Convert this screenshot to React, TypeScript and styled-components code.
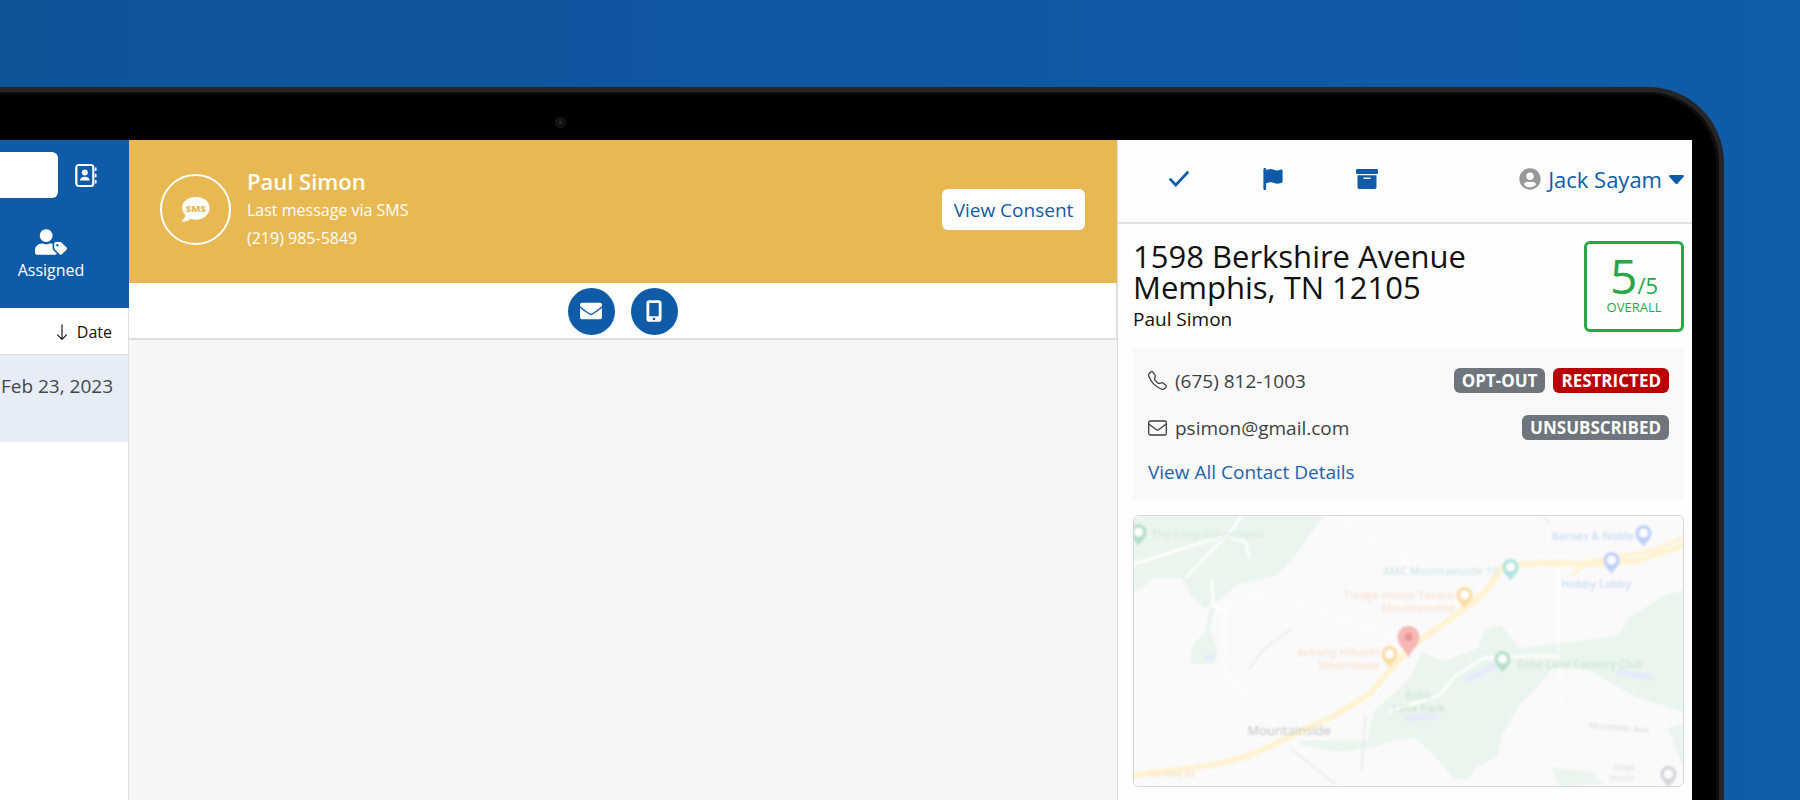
import React from "react";
import styled, { createGlobalStyle } from "styled-components";
import { FaUserTag, FaEnvelope, FaUserCircle } from "react-icons/fa";
import { FaFlag } from "react-icons/fa6";
import { BsArrowDown, BsTelephone } from "react-icons/bs";

const BLUE = "#0f5ba7";
const LINE = "#dddee0";

const GlobalStyle = createGlobalStyle`
  *, *::before, *::after { box-sizing: border-box; }
  body {
    margin: 0;
    font-family: "Open Sans", "Noto Sans", sans-serif;
    color: #111;
  }
  button, input { font: inherit; }
  button { border: 0; padding: 0; background: none; cursor: pointer; }
  svg { display: block; flex: none; }
`;

const Stage = styled.main`
  display: flex;
  height: 100vh;
  overflow: hidden;
  padding: 87px 76px 0 0;
  background: linear-gradient(90deg, #0e5497 0%, #0f57a0 45%, #105ca9 100%);
`;

const Lid = styled.div`
  flex: 1;
  display: flex;
  min-width: 0;
  border: 5px solid #252525;
  border-width: 5px 5px 0 0;
  border-radius: 0 76px 0 0;
  background: #0d0d0d;
  padding: 2px 3px 0 0;
`;

const Bezel = styled.div`
  flex: 1;
  display: flex;
  flex-direction: column;
  min-width: 0;
  padding-right: 24px;
  border-radius: 0 70px 0 0;
  background: #000;
`;

const CameraStrip = styled.div`
  display: grid;
  grid-template-columns: 555px auto;
  align-items: center;
  flex: none;
  height: 46px;
  padding-top: 10px;
`;

const Camera = styled.span`
  grid-column: 2;
  width: 11px;
  height: 11px;
  border-radius: 50%;
  background: radial-gradient(#26262b 15%, #0c0c0e 35%, #17171a 70%, #08080a 100%);
`;

const Screen = styled.div`
  flex: 1;
  display: grid;
  grid-template-columns: 129px minmax(0, 1fr) 575px;
  min-height: 0;
  background: #fff;
`;

const Sidebar = styled.aside`
  display: flex;
  flex-direction: column;
  border-right: 1px solid ${LINE};
`;

const SidebarHeader = styled.header`
  height: 168px;
  margin-right: -1px;
  padding-top: 12px;
  background: ${BLUE};
  color: #fff;
`;

const SearchRow = styled.div`
  display: flex;
  align-items: center;
  gap: 17px;
`;

const Search = styled.input`
  width: 58px;
  height: 46px;
  border: 0;
  border-radius: 0 6px 6px 0;
  background: #fff;
`;

const PlainButton = styled.button`
  color: inherit;
`;

const AssignedTab = styled(PlainButton)`
  display: flex;
  flex-direction: column;
  align-items: center;
  width: 64px;
  margin: 28px 0 0 19px;
  font-size: 16px;
  line-height: 24px;
`;

const SortButton = styled.button`
  display: flex;
  align-items: center;
  justify-content: flex-end;
  gap: 6px;
  height: 47px;
  padding: 2px 16px 0 0;
  border-bottom: 1px solid ${LINE};
  font-size: 16px;
  color: #111;
`;

const Message = styled.article`
  display: flex;
  justify-content: flex-end;
  height: 87px;
  padding: 18px 15px 0 0;
  background: #e6edf6;
  color: #41464c;
  font-size: 19px;
  line-height: 26px;
  white-space: nowrap;
`;

const Conversation = styled.section`
  display: flex;
  flex-direction: column;
  background: #f6f6f6;
`;

const ConversationHeader = styled.header`
  display: flex;
  align-items: center;
  height: 143px;
  padding: 0 32px 4px 31px;
  background: #e8b952;
  color: #fff;
`;

const ChannelBadge = styled.div`
  display: grid;
  place-items: center;
  width: 71px;
  height: 71px;
  border: 2px solid #fff;
  border-radius: 50%;
`;

const Contact = styled.div`
  flex: 1;
  padding: 0 0 2px 16px;
  font-size: 16px;
  line-height: 28px;
  font-weight: 500;
`;

const ContactName = styled.h2`
  margin: 0;
  font-size: 22px;
  line-height: 30px;
  font-weight: 600;
`;

const ContactLine = styled.p`
  margin: 0;
`;

const ConsentButton = styled.button`
  width: 143px;
  height: 41px;
  border-radius: 6px;
  background: #fff;
  color: ${BLUE};
  font-size: 19px;
`;

const ChannelBar = styled.nav`
  display: flex;
  align-items: center;
  justify-content: center;
  gap: 16px;
  height: 57px;
  padding-top: 1px;
  border: 1px solid ${LINE};
  border-width: 0 1px 2px 0;
  background: #fff;
`;

const RoundButton = styled.button`
  display: grid;
  place-items: center;
  width: 47px;
  height: 47px;
  border-radius: 50%;
  background: ${BLUE};
  color: #fff;
`;

const Details = styled.aside`
  display: flex;
  flex-direction: column;
  border-left: 1px solid ${LINE};
  background: #fefefe;
`;

const Toolbar = styled.div`
  display: flex;
  align-items: center;
  flex: none;
  height: 84px;
  padding: 0 8px 4px 46px;
  border-bottom: 2px solid #e2e2e4;
  color: ${BLUE};
`;

const ToolButton = styled.button`
  display: grid;
  place-items: center;
  width: 30px;
  height: 30px;
  margin-right: 64px;
  color: ${BLUE};
`;

const UserMenu = styled.button`
  display: flex;
  align-items: center;
  gap: 7px;
  margin-left: auto;
  color: ${BLUE};
  font-size: 22px;
  line-height: 30px;
`;

const Body = styled.div`
  display: flex;
  flex-direction: column;
  gap: 16px;
  padding: 17px 8px 0 15px;
`;

const Summary = styled.div`
  display: flex;
  justify-content: space-between;
  height: 91px;
`;

const Address = styled.h1`
  margin: 0;
  font-size: 31px;
  line-height: 31px;
  font-weight: 400;
  color: #111;
`;

const Owner = styled.p`
  margin: 3px 0 0;
  font-size: 19px;
  line-height: 26px;
`;

const Score = styled.div`
  display: flex;
  flex-direction: column;
  align-items: center;
  width: 100px;
  height: 91px;
  border: 3px solid #28a745;
  border-radius: 6px;
  color: #28a745;
`;

const ScoreValue = styled.div`
  padding-top: 8px;
  font-size: 48px;
  line-height: 48px;
  font-weight: 500;
`;

const ScoreTotal = styled.span`
  font-size: 22px;
  line-height: 22px;
`;

const ScoreLabel = styled.div`
  font-size: 13px;
  line-height: 14px;
`;

const ContactCard = styled.section`
  height: 151px;
  padding: 9px 15px 0 15px;
  background: #f9f9fa;
  color: #3f3f42;
  font-size: 19px;
`;

const ContactRow = styled.div`
  display: flex;
  align-items: center;
  gap: 8px;
  height: 47px;
`;

const ContactValue = styled.span`
  flex: 1;
`;

const Tag = styled.span<{ $danger?: boolean }>`
  padding: 0 8px;
  border-radius: 6px;
  background: ${(p) => (p.$danger ? "#b90003" : "#6e757d")};
  color: #fff;
  font-size: 17px;
  line-height: 25px;
  font-weight: 700;
`;

const DetailsLink = styled.a`
  display: block;
  color: #2263aa;
  line-height: 42px;
  text-decoration: none;
`;

const MapCard = styled.figure`
  height: 272px;
  margin: 0;
  overflow: hidden;
  border: 1px solid #d5d8d8;
  border-radius: 6px;
  background: #fafafa;
`;

function ContactsIcon() {
  return (
    <svg width="22" height="25" viewBox="0 0 22 25" fill="none" aria-hidden="true">
      <rect x="1.3" y="2" width="17" height="21" rx="2.4" stroke="#fff" strokeWidth="2.2" />
      <circle cx="9.8" cy="9.4" r="3" fill="#fff" />
      <path d="M5 17.6c0-2.600 1.700-3.900 4.800-3.900s4.800 1.300 4.800 3.900z" fill="#fff" />
      <path d="M20.700 4.500v3.500M20.700 10.700v3.500M20.700 16.900v3.500" stroke="#fff" strokeWidth="1.600" />
    </svg>
  );
}

function SmsIcon() {
  return (
    <svg width="30" height="27" viewBox="0 0 30 27" aria-hidden="true">
      <path
        d="M14.900 1C7.100 1 1.100 5.800 1.100 11.800c0 3 1.300 5.300 3.400 7.200C3.800 22 1.800 24 .3 25.600c3.200.5 6.400-.6 8.900-2.600 1.700.5 3.600.8 5.700.8 7.800 0 13.700-5.400 13.700-12S22.700 1 14.900 1z"
        fill="#fff"
      />
      <text x="14.900" y="15.500" textAnchor="middle" fontSize="9.500" fontWeight="800" fill="#e8b952">
        SMS
      </text>
    </svg>
  );
}

function PhoneIcon() {
  return (
    <svg width="16" height="22" viewBox="0 0 17 23" aria-hidden="true">
      <path
        fillRule="evenodd"
        fill="currentColor"
        d="M3.500 0h10A3 3 0 0 1 16.500 3v17a3 3 0 0 1-3 3h-10a3 3 0 0 1-3-3V3a3 3 0 0 1 3-3zM3.500 3v14h10V3zM8.500 18.500a1.400 1.400 0 1 0 0 2.800 1.400 1.400 0 0 0 0-2.800z"
      />
    </svg>
  );
}

function CheckIcon() {
  return (
    <svg width="20" height="16" viewBox="0 0 20 16" fill="none" aria-hidden="true">
      <path d="M1.500 8.500l5.300 5.500L18.500 1.500" stroke="currentColor" strokeWidth="2.600" strokeLinecap="round" />
    </svg>
  );
}

function ArchiveIcon() {
  return (
    <svg width="22" height="20" viewBox="0 0 22 20" aria-hidden="true">
      <rect width="22" height="5" rx="1.200" fill="currentColor" />
      <path
        fillRule="evenodd"
        fill="currentColor"
        d="M1.500 6.200h19v12a1.700 1.700 0 0 1-1.700 1.700H3.200a1.700 1.700 0 0 1-1.700-1.700zM7.500 8.500v1.500h7V8.500z"
      />
    </svg>
  );
}

function CaretIcon() {
  return (
    <svg width="15" height="9" viewBox="0 0 15 9" aria-hidden="true">
      <path
        d="M1.400 0h12.200c1.200 0 1.700 1.200.9 2.100L8.600 8.400c-.6.700-1.600.7-2.200 0L.5 2.100C-.3 1.200.2 0 1.400 0z"
        fill="currentColor"
      />
    </svg>
  );
}

function MailIcon() {
  return (
    <svg width="19" height="16" viewBox="0 0 19 16" fill="none" stroke="currentColor" strokeWidth="1.300" aria-hidden="true">
      <rect x=".7" y="1" width="17.600" height="14" rx="1.600" />
      <path d="M.8 4l7.300 5.500c.9.600 1.900.6 2.800 0L18.200 4" />
    </svg>
  );
}

function Pin({ x, y, color }: { x: number; y: number; color: string }) {
  return (
    <g transform={`translate(${x} ${y})`}>
      <path d="M0 13C-2 8-8 6-8-1a8 8 0 0 1 16 0C8 6 2 8 0 13z" fill={color} />
      <circle cy="-1" r="4.500" fill="#fdfdfd" />
    </g>
  );
}

function AreaMap() {
  return (
    <svg
      width="100%"
      height="270"
      viewBox="0 0 550 270"
      preserveAspectRatio="xMidYMid slice"
      role="img"
      aria-label="Map of Mountainside"
    >
      <defs>
        <filter id="soft" x="-5%" y="-5%" width="110%" height="110%">
          <feGaussianBlur stdDeviation="1.2" />
        </filter>
      </defs>
      <rect width="550" height="270" fill="#fafafa" />
      <g filter="url(#soft)">
        <g fill="#e9f5ed">
          <path d="M0 0H190C170 25 160 48 140 60L105 68 85 85 70 92 58 80 48 62 20 62 5 75 0 74z" />
          <path d="M82 92L76 112 84 135 82 148 56 148 60 128 72 116 76 90z" />
          <path d="M288 136L310 145 345 132 352 112 368 110 386 132 422 128 485 120 495 102 530 80 550 74V196L500 180 455 154 420 152 400 175 385 190 368 220 364 240 345 250 333 264 320 262 300 238 282 222 262 224 236 232 205 236 165 228 170 224 234 224 240 196 262 176 278 160z" />
          <path d="M534 212L550 208V252zM418 252l40 4 12 12-45 2z" />
        </g>
        <g stroke="#fefefe" fill="none" strokeWidth="3">
          <path d="M108 0L100 12 52 62M0 48L90 20 112 26 116 42M78 62L80 90 94 95M255 196L305 180 322 160 350 142 400 140 424 140" />
          <path
            d="M425 50V140L430 190 470 212M96 160L150 202M200 0L280 52M90 90L130 78 180 92 260 122M90 95L92 160 190 260"
            opacity="0.6"
          />
        </g>
        <g fill="none" stroke="#fff3d2" strokeLinecap="round">
          <path d="M0 259C60 252 100 248 126 235L200 200 236 178 276 132 315 104 350 78 370 50 410 47 470 48 505 44 550 30" strokeWidth="6" />
          <path d="M440 58L455 46 520 34 550 22" strokeWidth="4" />
        </g>
        <g fill="none" stroke="#ececec" strokeWidth="2">
          <path d="M116 153L128 135 158 113M158 233L202 268M232 200L228 254M410 0L416 8" />
        </g>
        <g fill="none" stroke="#e4ecfb" strokeWidth="6">
          <path d="M270 202L305 200M332 164L365 148M484 156L520 162M72 141h8" />
        </g>
        <g fontSize="11" fontWeight="600" opacity="0.65">
          <text x="18" y="22" fill="#cfe6d8">The Loop Playground</text>
          <text x="249" y="59" fill="#b4dde2">AMC Mountainside 10</text>
          <g fill="#fbd6bd">
            <text x="321" y="83" textAnchor="end">Tiedge House Tavern</text>
            <text x="321" y="96" textAnchor="end">Mountainside</text>
            <text x="246" y="140" textAnchor="end">Arirang Hibachi</text>
            <text x="246" y="153" textAnchor="end">Steakhouse</text>
          </g>
          <text x="418" y="24" fill="#b5c9f7">Barnes &amp; Noble</text>
          <text x="428" y="72" fill="#b5c9f7">Hobby Lobby</text>
          <g fill="#bddcc9">
            <text x="285" y="183" textAnchor="middle">Echo</text>
            <text x="285" y="196" textAnchor="middle">Lake Park</text>
            <text x="384" y="152">Echo Lake Country Club</text>
          </g>
          <text x="16" y="261" fill="#f3d6a8" fontSize="9">US Hwy 22</text>
          <text x="480" y="254" fill="#d5d5d8" fontSize="8">Stage</text>
          <text x="476" y="265" fill="#d5d5d8" fontSize="8">House</text>
          <text x="455" y="212" fill="#d0d0d0" fontSize="9" transform="rotate(5 455 212)">Mountain Ave</text>
        </g>
        <text x="114" y="219" fill="#c0c0c0" fontSize="13">Mountainside</text>
        <Pin x={5} y={17} color="#b6e0c8" />
        <Pin x={377} y={52} color="#b0e3df" />
        <Pin x={331} y={80} color="#fbdda6" />
        <Pin x={256} y={139} color="#fbdda6" />
        <Pin x={369} y={144} color="#b6e0c8" />
        <Pin x={510} y={18} color="#bfd0f8" />
        <Pin x={478} y={45} color="#bfd0f8" />
        <Pin x={535} y={259} color="#d3d7dd" />
        <path d="M275 142C272 133 264 130 264 121a11 11 0 0 1 22 0C286 130 278 133 275 142z" fill="#f6b7b5" />
        <circle cx="275" cy="121" r="4" fill="#e99694" />
      </g>
    </svg>
  );
}

export default function App() {
  return (
    <>
      <GlobalStyle />
      <Stage>
        <Lid>
          <Bezel>
            <CameraStrip>
              <Camera />
            </CameraStrip>
            <Screen>
              <Sidebar>
                <SidebarHeader>
                  <SearchRow>
                    <Search type="search" aria-label="Search messages" />
                    <PlainButton aria-label="Contacts">
                      <ContactsIcon />
                    </PlainButton>
                  </SearchRow>
                  <AssignedTab>
                    <FaUserTag size={32} />
                    Assigned
                  </AssignedTab>
                </SidebarHeader>
                <SortButton>
                  <BsArrowDown size={18} />
                  Date
                </SortButton>
                <Message>
                  <time dateTime="2023-02-23">Feb 23, 2023</time>
                </Message>
              </Sidebar>

              <Conversation>
                <ConversationHeader>
                  <ChannelBadge>
                    <SmsIcon />
                  </ChannelBadge>
                  <Contact>
                    <ContactName>Paul Simon</ContactName>
                    <ContactLine>Last message via SMS</ContactLine>
                    <ContactLine>(219) 985-5849</ContactLine>
                  </Contact>
                  <ConsentButton>View Consent</ConsentButton>
                </ConversationHeader>
                <ChannelBar>
                  <RoundButton aria-label="Email">
                    <FaEnvelope size={22} />
                  </RoundButton>
                  <RoundButton aria-label="Text message">
                    <PhoneIcon />
                  </RoundButton>
                </ChannelBar>
              </Conversation>

              <Details>
                <Toolbar>
                  <ToolButton aria-label="Mark done">
                    <CheckIcon />
                  </ToolButton>
                  <ToolButton aria-label="Flag">
                    <FaFlag size={22} />
                  </ToolButton>
                  <ToolButton aria-label="Archive">
                    <ArchiveIcon />
                  </ToolButton>
                  <UserMenu>
                    <FaUserCircle size={22} color="#999" />
                    Jack Sayam
                    <CaretIcon />
                  </UserMenu>
                </Toolbar>
                <Body>
                  <Summary>
                    <div>
                      <Address>
                        1598 Berkshire Avenue
                        <br />
                        Memphis, TN 12105
                      </Address>
                      <Owner>Paul Simon</Owner>
                    </div>
                    <Score>
                      <ScoreValue>
                        5<ScoreTotal>/5</ScoreTotal>
                      </ScoreValue>
                      <ScoreLabel>OVERALL</ScoreLabel>
                    </Score>
                  </Summary>
                  <ContactCard>
                    <ContactRow>
                      <BsTelephone size={19} />
                      <ContactValue>(675) 812-1003</ContactValue>
                      <Tag>OPT-OUT</Tag>
                      <Tag $danger>RESTRICTED</Tag>
                    </ContactRow>
                    <ContactRow>
                      <MailIcon />
                      <ContactValue>psimon@gmail.com</ContactValue>
                      <Tag>UNSUBSCRIBED</Tag>
                    </ContactRow>
                    <DetailsLink href="#contact">View All Contact Details</DetailsLink>
                  </ContactCard>
                  <MapCard>
                    <AreaMap />
                  </MapCard>
                </Body>
              </Details>
            </Screen>
          </Bezel>
        </Lid>
      </Stage>
    </>
  );
}
